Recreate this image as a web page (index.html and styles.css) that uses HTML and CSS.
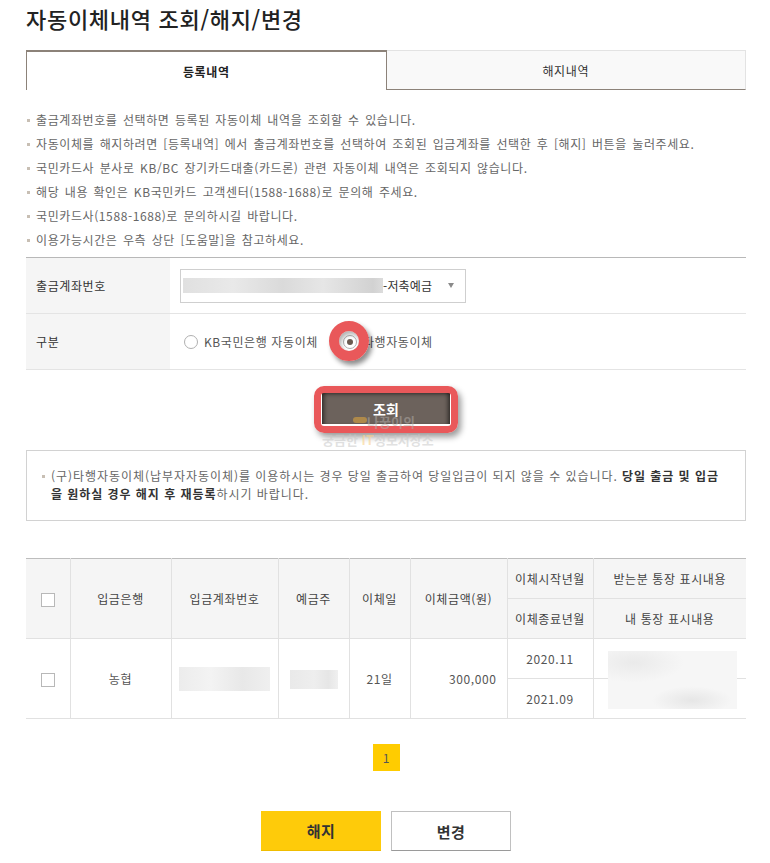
FILE: index.html
```html
<!DOCTYPE html>
<html lang="ko">
<head>
<meta charset="utf-8">
<title>자동이체내역 조회/해지/변경</title>
<link rel="stylesheet" href="styles.css">
</head>
<body>
<div class="page">
  <h1 class="title">자동이체내역 조회/해지/변경</h1>

  <div class="tabs">
    <div class="tab active">등록내역</div>
    <div class="tab off">해지내역</div>
  </div>

  <ul class="guide">
    <li>출금계좌번호를 선택하면 등록된 자동이체 내역을 조회할 수 있습니다.</li>
    <li>자동이체를 해지하려면 [등록내역] 에서 출금계좌번호를 선택하여 조회된 입금계좌를 선택한 후 [해지] 버튼을 눌러주세요.</li>
    <li>국민카드사 분사로 KB/BC 장기카드대출(카드론) 관련 자동이체 내역은 조회되지 않습니다.</li>
    <li>해당 내용 확인은 KB국민카드 고객센터(1588-1688)로 문의해 주세요.</li>
    <li>국민카드사(1588-1688)로 문의하시길 바랍니다.</li>
    <li>이용가능시간은 우측 상단 [도움말]을 참고하세요.</li>
  </ul>

  <div class="form">
    <div class="row">
      <div class="label">출금계좌번호</div>
      <div class="field">
        <div class="select">
          <span class="sel-blur"></span>
          <span class="sel-text">-저축예금</span>
          <span class="arrow"></span>
        </div>
      </div>
    </div>
    <div class="row">
      <div class="label">구분</div>
      <div class="field radios">
        <span class="radio-item"><span class="radio"></span><span class="radio-label">KB국민은행 자동이체</span></span>
        <span class="radio-item second"><span class="radio checked"><span class="ring"></span></span><span class="radio-label">타행자동이체</span></span>
      </div>
    </div>
  </div>

  <div class="btn-area">
    <button class="btn-query">조회<span class="btn-ring"></span></button>
    <div class="watermark">
      <span class="wm-pill"></span>
      <span class="wm-top">나꿍이의</span>
      <span class="wm-bottom">궁금한 <em>IT</em>정보저장소</span>
    </div>
  </div>

  <div class="notice">
    <p class="notice-text">(구)타행자동이체(납부자자동이체)를 이용하시는 경우 당일 출금하여 당일입금이 되지 않을 수 있습니다. <strong>당일 출금 및 입금<br>을 원하실 경우 해지 후 재등록</strong>하시기 바랍니다.</p>
  </div>

  <table class="list">
    <colgroup>
      <col class="c1"><col class="c2"><col class="c3"><col class="c4"><col class="c5"><col class="c6"><col class="c7"><col class="c8">
    </colgroup>
    <thead>
      <tr>
        <th rowspan="2" class="first"><span class="chk"></span></th>
        <th rowspan="2">입금은행</th>
        <th rowspan="2">입금계좌번호</th>
        <th rowspan="2">예금주</th>
        <th rowspan="2">이체일</th>
        <th rowspan="2">이체금액(원)</th>
        <th>이체시작년월</th>
        <th class="last">받는분 통장 표시내용</th>
      </tr>
      <tr>
        <th>이체종료년월</th>
        <th class="last">내 통장 표시내용</th>
      </tr>
    </thead>
    <tbody>
      <tr>
        <td rowspan="2" class="first"><span class="chk"></span></td>
        <td rowspan="2">농협</td>
        <td rowspan="2"><span class="blur-acct"></span></td>
        <td rowspan="2"><span class="blur-name"></span></td>
        <td rowspan="2">21일</td>
        <td rowspan="2" class="amount">300,000</td>
        <td>2020.11</td>
        <td class="last msg-cell"><span class="blur-msg"></span></td>
      </tr>
      <tr>
        <td>2021.09</td>
        <td class="last"></td>
      </tr>
    </tbody>
  </table>

  <div class="paging"><span class="page-on">1</span></div>

  <div class="actions">
    <button class="btn btn-yellow">해지</button>
    <button class="btn btn-white">변경</button>
  </div>
</div>
</body>
</html>
```

FILE: styles.css
```css
* { box-sizing: border-box; }

body {
  margin: 0;
  background: #fff;
  font-family: "Noto Sans CJK KR", "Noto Sans", sans-serif;
  font-size: 12px;
  color: #555;
  letter-spacing: 0.6px;
}

.page {
  width: 746px;
  padding-left: 26px;
}

.title {
  margin: 0;
  font-size: 22px;
  font-weight: 500;
  line-height: 36px;
  color: #222;
  letter-spacing: 0.7px;
}

/* tabs */
.tabs {
  display: flex;
  margin-top: 14px;
  height: 40px;
}
.tab {
  flex: 1;
  display: flex;
  align-items: center;
  justify-content: center;
  font-size: 12px;
  color: #333;
}
.tab.active {
  background: #fff;
  border: 1px solid #8c8279;
  border-top-width: 2px;
  border-bottom: none;
  font-weight: 700;
  color: #222;
}
.tab.off {
  background: #f9f9f9;
  border: 1px solid #e3e3e3;
  border-left: none;
  border-bottom: 1px solid #8c8279;
}

/* guide list */
.guide {
  list-style: none;
  margin: 0;
  padding: 18px 0 5px;
}
.guide li {
  position: relative;
  padding-left: 10px;
  line-height: 24px;
  color: #666;
  word-spacing: 1.5px;
}
.guide li::before {
  content: "";
  position: absolute;
  left: 1px;
  top: 11px;
  width: 3px;
  height: 3px;
  background: #c8bfb4;
}

/* form */
.form {
  border-top: 1px solid #b8b8b8;
}
.row {
  display: flex;
  height: 56px;
  border-bottom: 1px solid #e4e4e4;
}
.label {
  width: 144px;
  background: #f5f5f5;
  padding-left: 10px;
  display: flex;
  align-items: center;
  color: #333;
}
.field {
  flex: 1;
  display: flex;
  align-items: center;
  padding-left: 10px;
}
.select {
  width: 286px;
  height: 34px;
  border: 1px solid #cfcfcf;
  display: flex;
  align-items: center;
  padding-left: 2px;
}
.sel-blur {
  width: 200px;
  height: 15px;
  background: linear-gradient(90deg, #e0e0e0, #e9e9e9 25%, #dadada 50%, #e6e6e6 70%, #d2d2d2 95%, #dcdcdc);
}
.sel-text {
  color: #333;
  font-size: 12px;
  letter-spacing: 0.2px;
}
.arrow {
  margin-left: auto;
  margin-right: 11px;
  width: 0;
  height: 0;
  border-left: 3.5px solid transparent;
  border-right: 3.5px solid transparent;
  border-top: 5px solid #8a8a8a;
}

.radios {
  padding-left: 14px;
}
.radio-item {
  display: inline-flex;
  align-items: center;
}
.radio-item.second {
  margin-left: 25px;
}
.radio {
  position: relative;
  width: 14px;
  height: 14px;
  border: 1px solid #b0b0b0;
  border-radius: 50%;
  background: #fff;
}
.radio.checked::after {
  content: "";
  position: absolute;
  left: 3px;
  top: 3px;
  width: 6px;
  height: 6px;
  border-radius: 50%;
  background: #6a5a50;
}
.radio-label {
  margin-left: 6px;
  color: #555;
}
.ring {
  position: absolute;
  left: 50%;
  top: 50%;
  width: 40px;
  height: 40px;
  margin: -21px 0 0 -21px;
  border: 10px solid #e9585a;
  border-radius: 50%;
  box-shadow: 3px 4px 5px rgba(0, 0, 0, 0.45), inset 2px 3px 4px rgba(0, 0, 0, 0.3);
  z-index: 2;
}

/* query button */
.btn-area {
  position: relative;
  height: 80px;
  padding-top: 23px;
  display: flex;
  justify-content: center;
  align-items: flex-start;
}
.btn-query {
  position: relative;
  width: 128px;
  height: 31px;
  border: none;
  background: #6c625c;
  color: #fff;
  font-family: inherit;
  font-size: 14px;
  font-weight: 700;
  letter-spacing: 0;
  box-shadow: inset 5px 0 4px -3px rgba(0, 0, 0, 0.55), inset -5px 0 4px -3px rgba(0, 0, 0, 0.55), inset 0 4px 4px -3px rgba(0, 0, 0, 0.5);
  padding: 0;
}
.btn-ring {
  position: absolute;
  left: -8px;
  right: -8px;
  top: -7px;
  bottom: -9px;
  border: 7px solid #e9585a;
  border-radius: 10px;
  box-shadow: 3px 4px 6px rgba(0, 0, 0, 0.4);
}
.watermark {
  position: absolute;
  left: 0;
  top: 0;
  width: 100%;
  height: 100%;
  pointer-events: none;
  letter-spacing: 0;
}
.wm-pill {
  position: absolute;
  left: 327px;
  top: 47px;
  width: 14px;
  height: 6px;
  border-radius: 3px;
  background: rgba(230, 170, 60, 0.55);
}
.wm-top {
  position: absolute;
  left: 341px;
  top: 44px;
  line-height: 16px;
  font-size: 13px;
  font-weight: 700;
  color: rgba(180, 175, 170, 0.5);
}
.wm-bottom {
  position: absolute;
  left: 296px;
  top: 61px;
  line-height: 18px;
  font-size: 13px;
  font-weight: 700;
  color: rgba(200, 200, 200, 0.55);
}
.wm-bottom em {
  font-style: normal;
  color: rgba(250, 210, 140, 0.6);
}

/* notice */
.notice {
  border: 1px solid #d2d2d2;
  padding: 16px 12px 17px 24px;
}
.notice-text {
  position: relative;
  margin: 0;
  line-height: 18px;
  color: #666;
  letter-spacing: 0.95px;
}
.notice-text::before {
  content: "";
  position: absolute;
  left: -9px;
  top: 8px;
  width: 3px;
  height: 3px;
  background: #c8bfb4;
}
.notice-text strong {
  color: #333;
  font-weight: 700;
}

/* table */
.list {
  width: 720px;
  margin-top: 37px;
  border-collapse: collapse;
  table-layout: fixed;
  border-top: 1px solid #bdbdbd;
}
.c1 { width: 44px; }
.c2 { width: 101px; }
.c3 { width: 107px; }
.c4 { width: 71px; }
.c5 { width: 61px; }
.c6 { width: 97px; }
.c7 { width: 86px; }
.c8 { width: 153px; }

.list th,
.list td {
  border: 1px solid #e1e1e1;
  height: 40px;
  padding: 0;
  text-align: center;
  vertical-align: middle;
  font-size: 12px;
  font-weight: 400;
}
.list th {
  background: #f5f5f5;
  color: #444;
}
.list td {
  color: #555;
}
.list .first { border-left: none; }
.list .last { border-right: none; }
.list thead tr:first-child th { border-top: 1px solid #bdbdbd; }

.chk {
  display: inline-block;
  width: 14px;
  height: 14px;
  border: 1px solid #b8b8b8;
  background: #fff;
  vertical-align: middle;
}
.amount {
  text-align: right !important;
  padding-right: 10px !important;
}
.blur-acct {
  display: inline-block;
  width: 91px;
  height: 24px;
  vertical-align: middle;
  background: linear-gradient(90deg, #ececec, #f3f3f3 35%, #e8e8e8 70%, #efefef);
}
.blur-name {
  display: inline-block;
  width: 48px;
  height: 19px;
  vertical-align: middle;
  background: linear-gradient(90deg, #e9e9e9, #eeeeee 50%, #e6e6e6 80%, #f0f0f0);
}
.msg-cell {
  position: relative;
}
.blur-msg {
  position: absolute;
  left: 14px;
  top: 12px;
  width: 129px;
  height: 58px;
  background:
    radial-gradient(ellipse 40px 14px at 65% 85%, #e6e6e6, rgba(240, 240, 240, 0)),
    radial-gradient(ellipse 50px 20px at 20% 20%, #eaeaea, rgba(245, 245, 245, 0)),
    #f6f6f6;
  z-index: 1;
}

/* paging */
.paging {
  margin-top: 25px;
  display: flex;
  justify-content: center;
}
.page-on {
  width: 27px;
  height: 27px;
  background: #ffcc00;
  color: #555;
  font-size: 12px;
  letter-spacing: 0;
  display: flex;
  align-items: center;
  justify-content: center;
}

/* bottom actions */
.actions {
  margin-top: 40px;
  display: flex;
  justify-content: center;
  gap: 10px;
}
.btn {
  width: 120px;
  height: 40px;
  font-family: inherit;
  font-size: 15px;
  font-weight: 700;
  color: #333;
  letter-spacing: 0.5px;
  padding: 0;
}
.btn-yellow {
  background: #fecb0a;
  border: none;
  border-bottom: 1px solid #f0bd00;
}
.btn-white {
  background: #fff;
  border: 1px solid #c0c0c0;
  border-bottom-color: #9a9a9a;
}
```
